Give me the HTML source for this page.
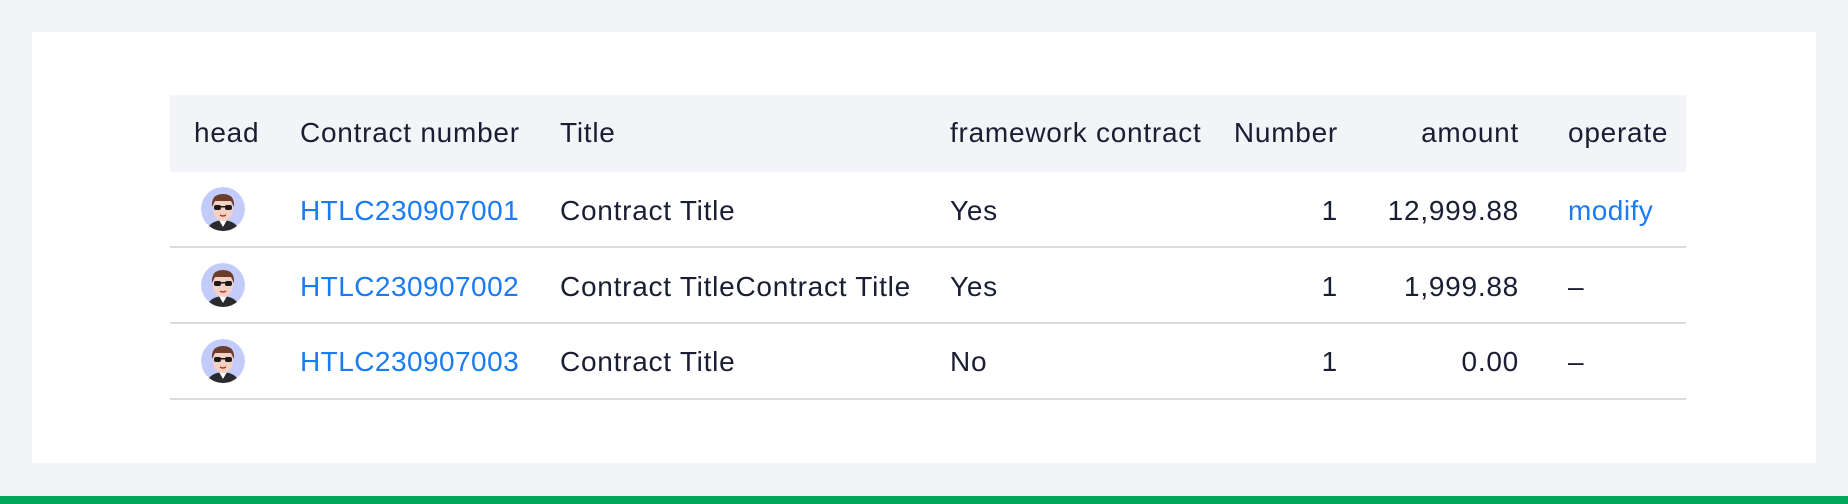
<!DOCTYPE html>
<html><head><meta charset="utf-8"><style>
*{margin:0;padding:0;box-sizing:border-box}
body{width:1848px;height:504px;background:#f3f4f8;position:relative;overflow:hidden;font-family:"Liberation Sans",sans-serif;color:#1b1d33}
.card{position:absolute;left:32px;top:32px;width:1784px;height:431px;background:#fff}
.green{position:absolute;left:0;top:496px;width:1848px;height:8px;background:#00a65a}
.hdr{position:absolute;left:170px;top:95px;width:1516px;height:77px;background:#f3f4f8}
.line{position:absolute;left:170px;width:1516px;height:2px;background:#dcdcdf}
.t{position:absolute;font-size:28px;line-height:32px;white-space:nowrap;letter-spacing:0.75px}
.r{text-align:right}
.b{color:#1a7bf5;letter-spacing:0.45px}
.av{position:absolute;width:44px;height:44px}
</style></head><body>
<div class="card"></div>
<div class="hdr"></div>
<div class="line" style="top:246px"></div>
<div class="line" style="top:322px"></div>
<div class="line" style="top:398px"></div>

<div class="t" style="left:194px;top:117px">head</div>
<div class="t" style="left:300px;top:117px">Contract number</div>
<div class="t" style="left:560px;top:117px">Title</div>
<div class="t" style="left:950px;top:117px">framework contract</div>
<div class="t r" style="right:510px;top:117px">Number</div>
<div class="t r" style="right:329px;top:117px">amount</div>
<div class="t" style="left:1568px;top:117px">operate</div>

<div class="t b" style="left:300px;top:195px">HTLC230907001</div>
<div class="t" style="left:560px;top:195px">Contract Title</div>
<div class="t" style="left:950px;top:195px">Yes</div>
<div class="t r" style="right:510px;top:195px">1</div>
<div class="t r" style="right:329px;top:195px">12,999.88</div>
<div class="t b" style="left:1568px;top:195px">modify</div>

<div class="t b" style="left:300px;top:271px">HTLC230907002</div>
<div class="t" style="left:560px;top:271px">Contract TitleContract Title</div>
<div class="t" style="left:950px;top:271px">Yes</div>
<div class="t r" style="right:510px;top:271px">1</div>
<div class="t r" style="right:329px;top:271px">1,999.88</div>
<div class="t" style="left:1568px;top:271px">–</div>

<div class="t b" style="left:300px;top:346px">HTLC230907003</div>
<div class="t" style="left:560px;top:346px">Contract Title</div>
<div class="t" style="left:950px;top:346px">No</div>
<div class="t r" style="right:510px;top:346px">1</div>
<div class="t r" style="right:329px;top:346px">0.00</div>
<div class="t" style="left:1568px;top:346px">–</div>

<svg width="0" height="0" style="position:absolute"><defs>
<g id="a">
<clipPath id="c"><circle cx="22" cy="22" r="22"/></clipPath>
<g clip-path="url(#c)">
<circle cx="22" cy="22" r="22" fill="#c3cbfa"/>
<path d="M6 44 Q8 34 22 33 Q36 34 38 44Z" fill="#2b2b2e"/>
<path d="M18 33 L22 40 L26 33Z" fill="#fff"/>
<ellipse cx="22" cy="22" rx="10" ry="12" fill="#f7d0c4"/>
<path d="M11 20 Q10 7 22 7 Q34 7 33 20 L30 14 L14 14Z" fill="#6b3d2a"/>
<rect x="13" y="18" width="7" height="5" rx="2" fill="#1c1c1c"/>
<rect x="24" y="18" width="7" height="5" rx="2" fill="#1c1c1c"/>
<rect x="19" y="19" width="6" height="1.5" fill="#1c1c1c"/>
<path d="M19 28 Q22 30 25 28" stroke="#c0392b" stroke-width="1.5" fill="none"/>
</g></g></defs></svg>
<svg class="av" style="left:201px;top:187px" viewBox="0 0 44 44"><use href="#a"/></svg>
<svg class="av" style="left:201px;top:263px" viewBox="0 0 44 44"><use href="#a"/></svg>
<svg class="av" style="left:201px;top:339px" viewBox="0 0 44 44"><use href="#a"/></svg>

<div class="green"></div>
</body></html>
